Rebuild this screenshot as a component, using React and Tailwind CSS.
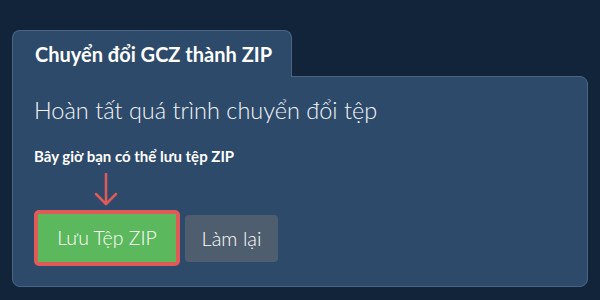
import React from 'react';

const App = () => {
  return (
    <div
      className="w-[600px] h-[300px] bg-[#12243a] px-[12px] pt-[30px] overflow-hidden"
      style={{ fontFamily: 'Lato, "Noto Sans", sans-serif' }}
    >
      {/* Tab header */}
      <div className="relative z-10 -mb-px w-[280px] h-[47px] bg-[#2d4a6a] border border-b-0 border-[#4b6685] rounded-t-[8px] pl-[22px] pt-[13px]">
        <span className="text-[20px] font-bold text-white leading-none">Chuyển đổi GCZ thành ZIP</span>
      </div>

      {/* Panel */}
      <div className="h-[211px] bg-[#2d4a6a] border border-[#4b6685] rounded-b-[8px] rounded-tr-[8px] pl-[21px] pt-[18px]">
        <h2 className="text-[23.5px] font-light text-[#f2f5f8] leading-[30px]">
          Hoàn tất quá trình chuyển đổi tệp
        </h2>
        <p className="mt-[22px] text-[15px] font-bold text-white leading-[18px]">
          Bây giờ bạn có thể lưu tệp ZIP
        </p>

        {/* Pointer arrow */}
        <div className="ml-[60px] mt-[8px] h-[34px] w-[24px]">
          <svg width="24" height="34" viewBox="0 0 24 34" fill="none">
            <path d="M12 1 V31" stroke="#df5b58" strokeWidth="2.5" strokeLinecap="round" />
            <path d="M2 21 L12 31 L22 21" stroke="#df5b58" strokeWidth="2.5" strokeLinecap="round" strokeLinejoin="round" />
          </svg>
        </div>

        <div className="mt-[3px] flex items-center gap-[5px]">
          <div className="rounded-[5px] bg-[#df5b58] p-[4px]">
            <button className="h-[48px] w-[138px] bg-[#5cb85c] text-white text-[19.5px] font-light leading-none">
              Lưu Tệp ZIP
            </button>
          </div>
          <button className="h-[47px] w-[93px] rounded-[4px] bg-[#4e5e6e] text-white text-[20px] font-light leading-none">
            Làm lại
          </button>
        </div>
      </div>
    </div>
  );
};

export default App;
